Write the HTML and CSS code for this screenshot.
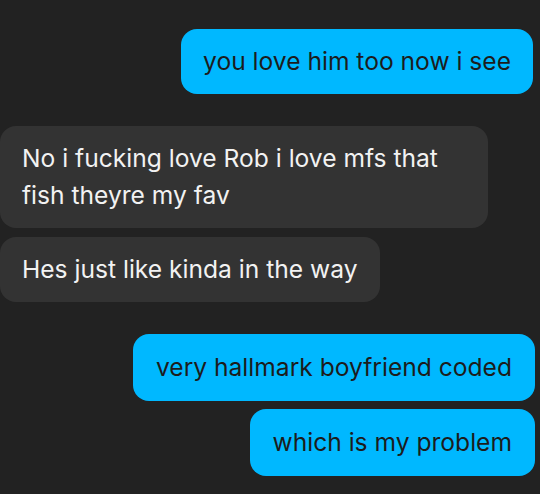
FILE: index.html
```html
<!DOCTYPE html>
<html lang="en">
<head>
  <meta charset="UTF-8">
  <meta name="viewport" content="width=device-width, initial-scale=1">
  <title>Messages</title>
  <link rel="stylesheet" href="styles.css">
</head>
<body>

  <div class="chat">
    <div class="group group-sent group-top">
      <div class="bubble bubble-sent">you love him too now i see</div>
    </div>

    <div class="group group-received">
      <div class="bubble bubble-received">No i fucking love Rob i love mfs that fish theyre my fav</div>
      <div class="bubble bubble-received">Hes just like kinda in the way</div>
    </div>

    <div class="group group-sent group-last">
      <div class="bubble bubble-sent">very hallmark boyfriend coded</div>
      <div class="bubble bubble-sent">which is my problem</div>
    </div>
  </div>

</body>
</html>
```

FILE: styles.css
```css
* {
  box-sizing: border-box;
}
body {
  margin: 0;
  padding: 0;
  height: 494px;
  overflow: hidden;
  background: #222222;
  font-family: 'Inter', 'Noto Sans', sans-serif;
}
.chat {
  display: flex;
  flex-direction: column;
  gap: 32px;
  padding-top: 29px;
}
.group {
  display: flex;
  flex-direction: column;
  gap: 9px;
}
.group-sent {
  align-items: flex-end;
  padding-right: 5px;
}
.group-top {
  padding-right: 7px;
}
.group-received {
  align-items: flex-start;
}
.group-last {
  gap: 8px;
}
.bubble {
  font-size: 24.6px;
  line-height: 37px;
  padding: 14px 22px;
  border-radius: 16px;
  max-width: 488px;
}
.group-last .bubble {
  padding: 15px 23px;
}
.bubble-sent {
  background: #00b8ff;
  color: #1c1c1c;
}
.bubble-received {
  background: #333333;
  color: #f2f2f2;
}
```
